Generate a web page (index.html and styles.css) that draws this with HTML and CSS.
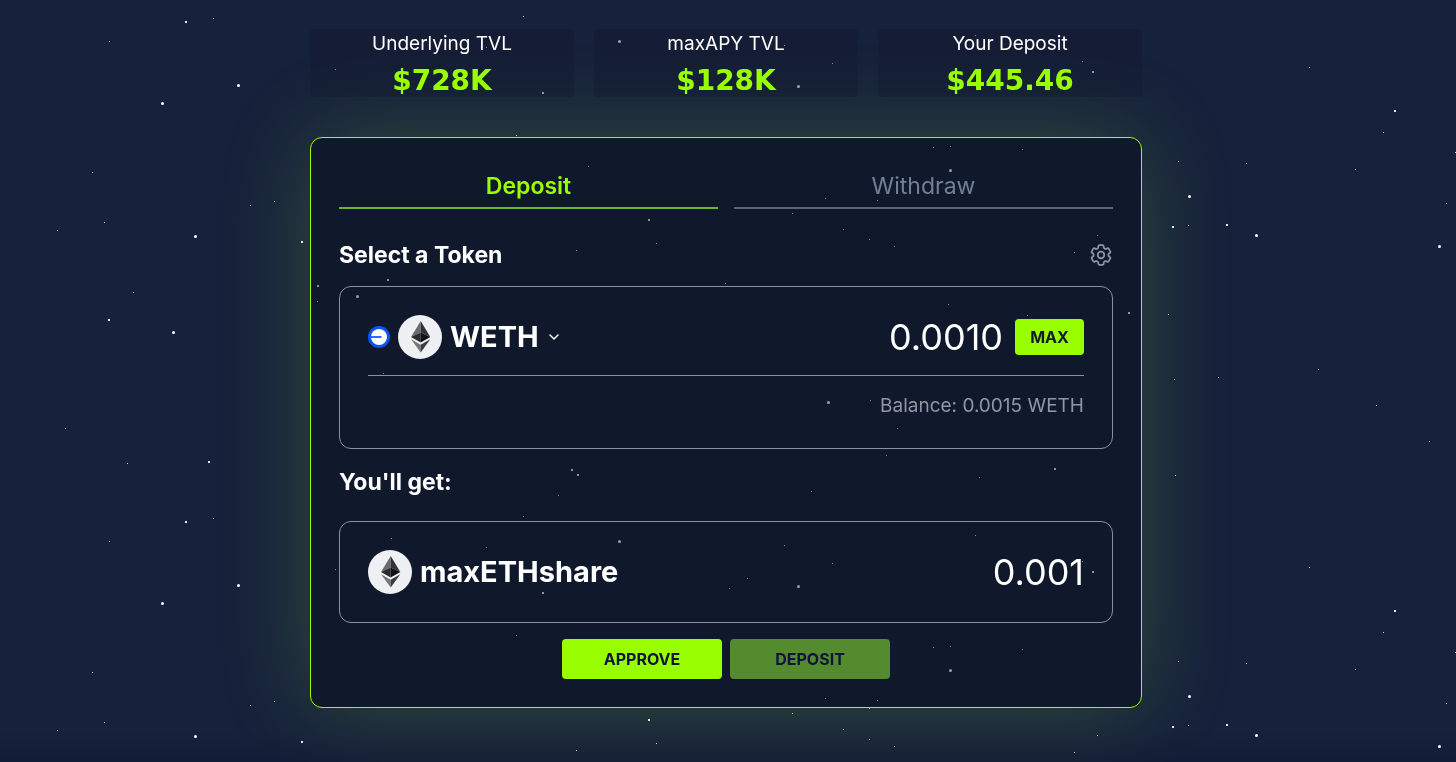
FILE: index.html
```html
<!DOCTYPE html>
<html lang="en">
<head>
    <meta charset="UTF-8">
    <meta name="viewport" content="width=device-width, initial-scale=1.0">
    <title>maxAPY Vault</title>
    <link rel="stylesheet" href="styles.css">
</head>
<body>

    <!-- Starry background, the field repeats every 500px -->
    <svg class="stars" width="100%" height="100%" aria-hidden="true">
        <g id="star-field">
            <path class="star-small" transform="translate(0.5 0.5)" d="M213 18h0M109 41h0M92 172h0M57 230h0M104 222h0M250 205h0M274 201h0M133 292h0M65 428h0M127 463h0M523 16h0M486 47h0M391 38h0M335 69h0M516 135h0M588 166h0M656 243h0M576 250h0M317 301h0M383 373h0M558 495h0M784 45h0M832 63h0M975 35h0M1082 61h0M933 147h0M950 146h0M1022 149h0M825 198h0M792 213h0M843 229h0M869 239h0M877 200h0M869 208h0M894 246h0M1097 235h0M1074 252h0M948 304h0M1027 315h0M920 345h0M870 400h0M897 428h0M725 283h0M811 491h0M979 477h0M886 455h0M729 88h0M747 78h0M1309 67h0M1383 132h0M1455 152h0M1178 161h0M1246 163h0M1355 169h0M1446 203h0M1188 225h0M1168 314h0M1318 369h0M1376 405h0M1429 441h0M1175 475h0M1218 377h0M1174 379h0"/>
            <path class="star-medium" d="M186 22h0M302 242h0M109 320h0M209 462h0M543 93h0M649 220h0M388 280h0M318 286h0M572 470h0M578 475h0M1093 72h0M1129 313h0M1055 469h0M1395 111h0M1173 227h0M1227 225h0"/>
            <path class="star-large" transform="translate(0.5 0.5)" d="M238 85h0M162 103h0M195 236h0M173 332h0M619 41h0M357 296h0M798 86h0M950 170h0M828 402h0M1189 196h0M1256 235h0M1439 246h0"/>
        </g>
        <use href="#star-field" y="500"/>
        <use href="#star-field" y="1000"/>
    </svg>

    <!-- Ethereum logo, used by both token rows -->
    <svg class="symbols" aria-hidden="true">
        <symbol id="eth-logo" viewBox="0 0 44 44">
            <circle cx="22" cy="22" r="22" fill="#eff0f4"/>
            <path d="M22.7 6v11.600l-9.700 4.400z" fill="#6b6b6b"/>
            <path d="M22.7 6v11.600l9.600 4.400z" fill="#333333"/>
            <path d="M13 22l9.700-4.400v9.900z" fill="#2b2b2b"/>
            <path d="M32.300 22l-9.600-4.400v9.900z" fill="#111111"/>
            <path d="M13 24.300l9.700 5.400v7.800z" fill="#777777"/>
            <path d="M32.300 24.300l-9.600 5.400v7.800z" fill="#3a3a3a"/>
        </symbol>
    </svg>

    <main class="page">

        <!-- Stats -->
        <div class="stats">
            <div class="stat">
                <div class="stat-label">Underlying TVL</div>
                <div class="stat-value">$728K</div>
            </div>
            <div class="stat">
                <div class="stat-label">maxAPY TVL</div>
                <div class="stat-value">$128K</div>
            </div>
            <div class="stat">
                <div class="stat-label">Your Deposit</div>
                <div class="stat-value">$445.46</div>
            </div>
        </div>

        <!-- Deposit card -->
        <div class="card">
            <div class="tabs">
                <button class="tab active">Deposit</button>
                <button class="tab">Withdraw</button>
            </div>

            <div class="heading-row">
                <h2>Select a Token</h2>
                <button class="icon-button" aria-label="Settings">
                    <svg width="24" height="24" viewBox="1 1 22 22" fill="none" stroke="#9196a3" stroke-width="1.600" stroke-linecap="round" stroke-linejoin="round">
                        <path d="M9.594 3.94c.09-.542.56-.94 1.11-.94h2.593c.55 0 1.02.398 1.11.94l.213 1.281c.063.374.313.686.645.87.074.04.147.083.22.127.325.196.72.257 1.075.124l1.217-.456a1.125 1.125 0 0 1 1.37.49l1.296 2.247a1.125 1.125 0 0 1-.26 1.431l-1.003.827c-.293.241-.438.613-.43.992a7.723 7.723 0 0 1 0 .255c-.008.378.137.75.43.991l1.004.827c.424.35.534.955.26 1.43l-1.298 2.247a1.125 1.125 0 0 1-1.369.491l-1.217-.456c-.355-.133-.75-.072-1.076.124a6.47 6.47 0 0 1-.22.128c-.331.183-.581.495-.644.869l-.213 1.281c-.09.543-.56.94-1.11.94h-2.594c-.55 0-1.019-.398-1.11-.94l-.213-1.281c-.062-.374-.312-.686-.644-.87a6.52 6.52 0 0 1-.22-.127c-.325-.196-.72-.257-1.076-.124l-1.217.456a1.125 1.125 0 0 1-1.369-.49l-1.297-2.247a1.125 1.125 0 0 1 .26-1.431l1.004-.827c.292-.24.437-.613.43-.991a6.932 6.932 0 0 1 0-.255c.007-.38-.138-.751-.43-.992l-1.004-.827a1.125 1.125 0 0 1-.26-1.43l1.297-2.247a1.125 1.125 0 0 1 1.37-.491l1.216.456c.356.133.751.072 1.076-.124.072-.044.146-.086.22-.128.332-.183.582-.495.644-.869l.214-1.28Z"/>
                        <circle cx="12" cy="12" r="3"/>
                    </svg>
                </button>
            </div>

            <div class="token-box">
                <div class="token-row underlined">
                    <button class="token">
                        <svg class="chain" width="22" height="22" viewBox="0 0 22 22">
                            <circle cx="11" cy="11" r="11" fill="#0b52fb"/>
                            <circle cx="11" cy="11" r="8" fill="#ffffff"/>
                            <path d="M3 10h10.500v2H3z" fill="#2f6bff"/>
                        </svg>
                        <svg width="44" height="44"><use href="#eth-logo"/></svg>
                        <span class="token-name">WETH</span>
                        <svg class="chevron" width="10" height="6" viewBox="0 0 10 6" fill="none" stroke="#ffffff" stroke-width="1.500" stroke-linecap="round" stroke-linejoin="round">
                            <path d="M1 1l4 4l4 -4"/>
                        </svg>
                    </button>
                    <input class="amount" type="text" value="0.0010" aria-label="Deposit amount">
                    <button class="max-button">MAX</button>
                </div>
                <div class="balance">Balance: 0.0015 WETH</div>
            </div>

            <h2 class="get-heading">You'll get:</h2>

            <div class="token-box">
                <div class="token-row">
                    <div class="token">
                        <svg width="44" height="44"><use href="#eth-logo"/></svg>
                        <span class="token-name">maxETHshare</span>
                    </div>
                    <div class="amount">0.001</div>
                </div>
            </div>

            <div class="actions">
                <button class="action">APPROVE</button>
                <button class="action" disabled>DEPOSIT</button>
            </div>
        </div>
    </main>

</body>
</html>
```
FILE: styles.css
```css
* {
    box-sizing: border-box;
}

body {
    margin: 0;
    min-height: 100vh;
    font-family: Inter, sans-serif;
    color: white;
    background: linear-gradient(to top, #131c37, #16213b 32px);
}

button {
    font-family: inherit;
    color: inherit;
    background: none;
    border: none;
    padding: 0;
    cursor: pointer;
}

svg {
    display: block;
}

/* Stars */
.stars {
    position: fixed;
    top: 0;
    left: 0;
    z-index: -1;
}

.stars path {
    stroke: white;
    stroke-linecap: square;
}

.star-small {
    stroke-width: 1px;
    opacity: 0.8;
}

.star-medium {
    stroke-width: 2px;
    opacity: 0.9;
}

.stars .star-large {
    stroke-width: 3px;
    stroke-linecap: round;
}

.symbols {
    position: absolute;
    width: 0;
    height: 0;
}

.page {
    max-width: 864px;
    margin: 0 auto;
    padding: 29px 18px 28px 14px;
}

/* Stats */
.stats {
    display: grid;
    grid-template-columns: repeat(3, 1fr);
    gap: 20px;
    margin-bottom: 40px;
}

.stat {
    display: flex;
    flex-direction: column;
    gap: 8px;
    padding: 1px 0;
    text-align: center;
    border-radius: 4px;
    background-color: rgba(18, 24, 44, 0.4);
}

.stat-label {
    font-size: 19px;
    line-height: 28px;
}

.stat-value {
    font-family: "DejaVu Sans", sans-serif;
    font-size: 28px;
    font-weight: bold;
    line-height: 30px;
    color: #99ff00;
}

/* Card */
.card {
    padding: 28px;
    border: 1px solid #99ff00;
    border-radius: 12px;
    background-color: rgba(8, 12, 22, 0.4);
    box-shadow: 0 0 96px rgba(153, 255, 60, 0.2);
}

.tabs {
    display: grid;
    grid-template-columns: 1fr 1fr;
    gap: 16px;
}

.tab {
    font-size: 23px;
    line-height: 41px;
    color: #718096;
    border-bottom: 2px solid #5e6475;
}

.tab.active {
    font-weight: 600;
    color: #99ff00;
    border-bottom-color: #6bb52a;
}

.heading-row {
    display: flex;
    justify-content: space-between;
    align-items: center;
    margin: 28px 0 13px;
}

h2 {
    margin: 0;
    font-size: 23px;
    font-weight: bold;
    line-height: 36px;
}

.get-heading {
    margin: 15px 0 21px;
}

/* Token boxes */
.token-box {
    padding: 28px;
    border: 1px solid #8b90a0;
    border-radius: 12px;
}

.token-row {
    display: flex;
    align-items: center;
    gap: 12px;
}

.token-row.underlined {
    padding-bottom: 16px;
    border-bottom: 1px solid #8b90a0;
}

.token {
    display: flex;
    align-items: center;
    gap: 8px;
}

.token-name {
    font-size: 29px;
    font-weight: bold;
    line-height: 44px;
}

.chevron {
    margin-left: 2px;
}

.amount {
    flex: 1;
    min-width: 0;
    padding: 0;
    font-family: inherit;
    font-size: 36px;
    line-height: 44px;
    text-align: right;
    color: white;
    background: none;
    border: none;
    outline: none;
}

.max-button {
    width: 69px;
    height: 36px;
    font-size: 16px;
    font-weight: bold;
    color: #10182c;
    border-radius: 4px;
    background-color: #99ff00;
}

.balance {
    margin-top: 16px;
    font-size: 19px;
    line-height: 28px;
    text-align: right;
    color: #9196a3;
}

/* Buttons */
.actions {
    display: flex;
    justify-content: center;
    gap: 8px;
    margin-top: 16px;
}

.action {
    width: 160px;
    height: 40px;
    font-size: 16px;
    font-weight: bold;
    color: #10143a;
    border-radius: 4px;
    background-color: #99ff00;
}

.action:disabled {
    background-color: #558b2f;
    cursor: not-allowed;
}
```
